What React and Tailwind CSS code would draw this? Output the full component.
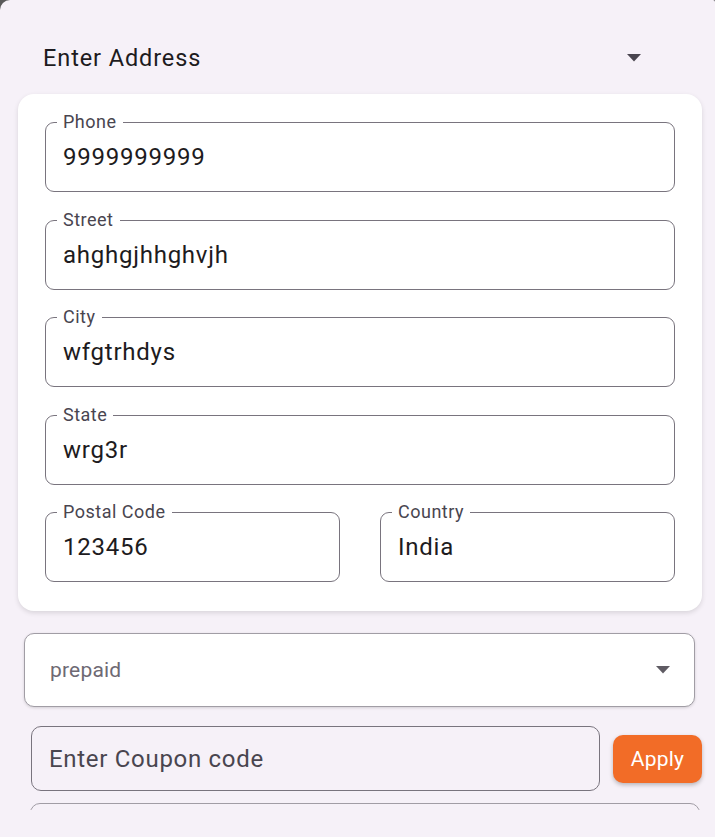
import React from 'react';

// ── Data ──────────────────────────────────────────────────────────────────────
const FIELDS = [
  { label: 'Phone', value: '9999999999' },
  { label: 'Street', value: 'ahghgjhhghvjh' },
  { label: 'City', value: 'wfgtrhdys' },
  { label: 'State', value: 'wrg3r' },
];

const FONT = { fontFamily: 'Roboto, "Noto Sans", sans-serif' };

// ── Sub-components ────────────────────────────────────────────────────────────
function Caret({ color = '#49454f' }) {
  return (
    <svg width="14" height="8" viewBox="0 0 14 8" aria-hidden="true">
      <path d="M0 0 L14 0 L7 7.5 Z" fill={color} />
    </svg>
  );
}

function OutlinedField({ label, value, className = '' }) {
  return (
    <div
      className={`relative h-[70px] rounded-[9px] border border-[#79747e] flex items-center pl-[17px] ${className}`}
    >
      <span className="absolute left-[11px] top-[-11px] bg-white px-[6px] text-[18px] leading-[20px] tracking-[0.5px] text-[#49454f]">
        {label}
      </span>
      <span className="text-[24px] leading-[28px] tracking-[0.75px] text-[#1d1b20]">
        {value}
      </span>
    </div>
  );
}

// ── Main page ─────────────────────────────────────────────────────────────────
export default function App() {
  return (
    <div className="w-[715px] h-[837px] bg-[#5a5a5a] overflow-hidden" style={FONT}>
      <div className="h-full bg-[#f6f1f8] rounded-tl-[10px] rounded-tr-[2px]">
        <div className="h-[810px] overflow-hidden">
          {/* Header */}
          <div className="flex items-center justify-between pt-[44px] pl-[43px] pr-[74px] mb-[22px]">
            <span className="text-[23.5px] leading-[28px] tracking-[0.9px] text-[#1d1b20]">
              Enter Address
            </span>
            <Caret />
          </div>

          {/* Address card */}
          <section className="ml-[18px] mr-[13px] bg-white rounded-[16px] shadow-[0_2px_5px_rgba(0,0,0,0.12)] px-[27px] pt-[28px] pb-[29px] flex flex-col gap-[27.5px]">
            {FIELDS.map((f) => (
              <OutlinedField key={f.label} label={f.label} value={f.value} />
            ))}
            <div className="flex gap-[40px]">
              <OutlinedField label="Postal Code" value="123456" className="flex-1" />
              <OutlinedField label="Country" value="India" className="flex-1" />
            </div>
          </section>

          {/* Payment type */}
          <div className="mt-[22px] ml-[24px] mr-[20px] h-[74px] bg-white rounded-[10px] border border-[#a19da5] shadow-[0_1px_3px_rgba(0,0,0,0.15)] flex items-center justify-between pl-[25px] pr-[24px]">
            <span className="text-[21px] leading-[24px] tracking-[0.2px] text-[#6e6973]">prepaid</span>
            <Caret color="#5f5b63" />
          </div>

          {/* Coupon */}
          <div className="mt-[19px] ml-[31px] mr-[13px] flex items-center gap-[13px]">
            <div className="flex-1 h-[65px] rounded-[10px] border border-[#79747e] flex items-center pl-[17px]">
              <span className="text-[24px] leading-[28px] tracking-[0.7px] text-[#49454f]">
                Enter Coupon code
              </span>
            </div>
            <button className="w-[89px] h-[48px] rounded-[10px] bg-[#f26c27] text-white text-[21px] leading-[24px] tracking-[0.2px] shadow-[0_2px_4px_rgba(0,0,0,0.25)]">
              Apply
            </button>
          </div>

          {/* Next field (partially visible) */}
          <div className="mt-[12px] ml-[30px] mr-[15px] h-[60px] rounded-[10px] border border-[#a19da5]" />
        </div>
      </div>
    </div>
  );
}
